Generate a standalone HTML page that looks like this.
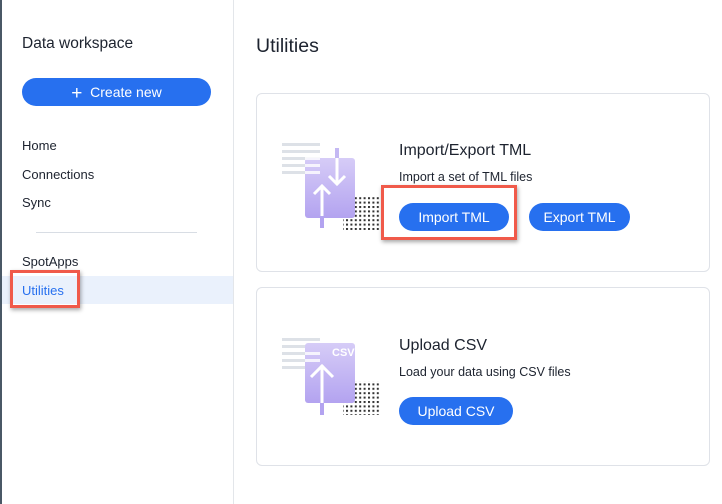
<!DOCTYPE html>
<html><head><style>
*{margin:0;padding:0;box-sizing:border-box}
body{width:722px;height:504px;background:#fff;font-family:"Liberation Sans",sans-serif;color:#1d232f;position:relative;overflow:hidden}
.a{position:absolute}
.btn{position:absolute;background:#2770ef;color:#fff;border-radius:14px;font-size:14px;text-align:center;line-height:28px}
.card{position:absolute;left:256px;width:454px;border:1px solid #dfe2e8;border-radius:6px}
.red{position:absolute;border:3px solid #f05a4a;box-shadow:1px 2px 4px rgba(0,0,0,.35)}
</style></head><body>
<div class="a" style="left:0;top:0;width:2px;height:504px;background:#4a5866"></div>
<div class="a" style="left:233px;top:0;width:1px;height:504px;background:#e3e6ea"></div>
<div class="a" style="left:22px;top:35px;font-size:15.5px">Data workspace</div>
<div class="btn" style="left:22px;top:78px;width:189px;height:28px"><span style="font-size:19px;vertical-align:-2px">+</span>&nbsp; Create new</div>
<div class="a" style="left:22px;top:138px;font-size:13px">Home</div>
<div class="a" style="left:22px;top:167px;font-size:13px">Connections</div>
<div class="a" style="left:22px;top:195px;font-size:13px">Sync</div>
<div class="a" style="left:36px;top:232px;width:161px;height:1px;background:#d8dde4"></div>
<div class="a" style="left:22px;top:254px;font-size:13px">SpotApps</div>
<div class="a" style="left:2px;top:276px;width:231px;height:28px;background:#eaf1fc"></div>
<div class="a" style="left:22px;top:283px;font-size:13px;color:#2770ef">Utilities</div>
<div class="red" style="left:10px;top:270px;width:70px;height:38px"></div>
<div class="a" style="left:256px;top:35px;font-size:19.5px">Utilities</div>

<div class="card" style="top:93px;height:179px"></div>
<div class="card" style="top:287px;height:179px"></div>

<svg class="a" style="left:280px;top:140px" width="105" height="95">
<defs><linearGradient id="g" x1="0" y1="0" x2="0" y2="1"><stop offset="0" stop-color="#d6ccf7"/><stop offset="1" stop-color="#b3a3f0"/></linearGradient>
<pattern id="d" width="4.4" height="4.4" patternUnits="userSpaceOnUse"><rect width="2" height="2" fill="#333"/></pattern></defs>
<rect x="63" y="56" width="38" height="34" fill="url(#d)"/>
<g fill="#dde1e7"><rect x="2" y="3" width="38" height="3"/><rect x="2" y="10" width="38" height="3"/><rect x="2" y="17" width="38" height="3"/><rect x="2" y="24" width="38" height="3"/><rect x="2" y="31" width="38" height="3"/></g>
<rect x="25" y="18" width="50" height="60" rx="3" fill="url(#g)"/>
<rect x="55" y="8" width="4" height="10" fill="#c4b8f3"/><rect x="40" y="78" width="4" height="10" fill="#b3a3f0"/>
<g stroke="#fff" stroke-width="3" fill="none"><path d="M57 18v26M49 36l8 8 8-8"/><path d="M42 76V46M34 54l8-8 8 8"/></g>
<g fill="#fff" opacity=".8"><rect x="25" y="17" width="15" height="3"/><rect x="25" y="24" width="15" height="3"/><rect x="25" y="31" width="15" height="3"/></g>
</svg>
<svg class="a" style="left:280px;top:335px" width="105" height="95">
<rect x="63" y="46" width="38" height="34" fill="url(#d)"/>
<g fill="#dde1e7"><rect x="2" y="3" width="38" height="3"/><rect x="2" y="10" width="38" height="3"/><rect x="2" y="17" width="38" height="3"/><rect x="2" y="24" width="38" height="3"/><rect x="2" y="31" width="38" height="3"/></g>
<rect x="25" y="8" width="50" height="60" rx="3" fill="url(#g)"/>
<rect x="40" y="68" width="4" height="12" fill="#b3a3f0"/>
<text x="52" y="21" font-size="11" font-weight="bold" fill="#fff" font-family="Liberation Sans">CSV</text>
<g stroke="#fff" stroke-width="3" fill="none"><path d="M42 68V30M31 42l11-11 11 11"/></g>
<g fill="#fff" opacity=".8"><rect x="25" y="17" width="15" height="3"/><rect x="25" y="24" width="15" height="3"/></g>
</svg>

<div class="a" style="left:399px;top:142px;font-size:16px">Import/Export TML</div>
<div class="a" style="left:399px;top:170px;font-size:12.5px">Import a set of TML files</div>
<div class="btn" style="left:399px;top:203px;width:110px;height:28px">Import TML</div>
<div class="btn" style="left:529px;top:203px;width:101px;height:28px">Export TML</div>
<div class="red" style="left:381px;top:185px;width:136px;height:55px"></div>

<div class="a" style="left:399px;top:337px;font-size:16px">Upload CSV</div>
<div class="a" style="left:399px;top:365px;font-size:12.5px">Load your data using CSV files</div>
<div class="btn" style="left:399px;top:397px;width:114px;height:28px">Upload CSV</div>
</body></html>
